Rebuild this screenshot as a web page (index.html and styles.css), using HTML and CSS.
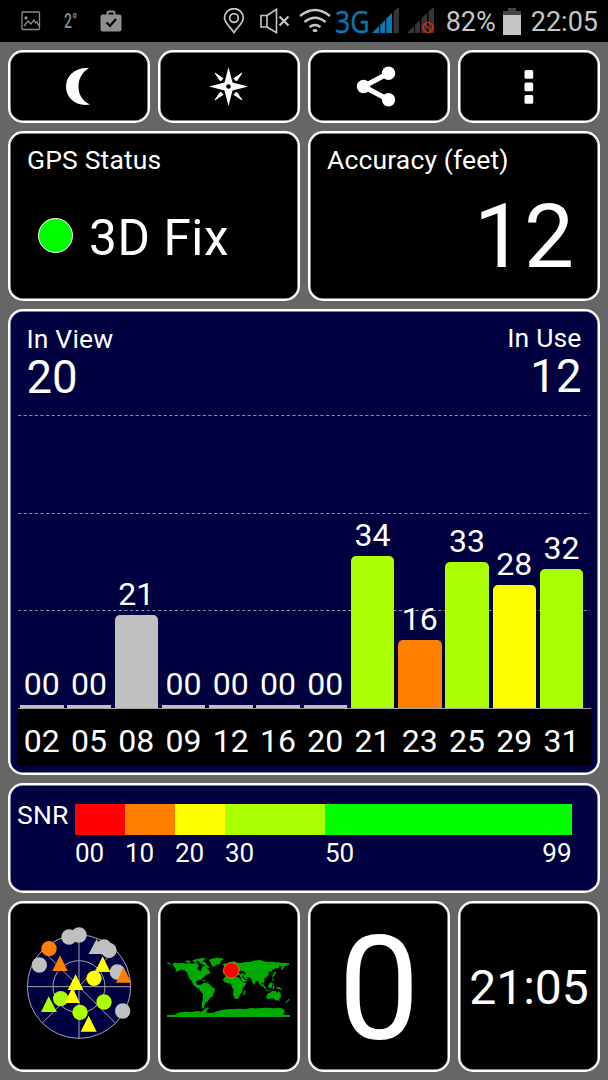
FILE: index.html
```html
<!DOCTYPE html>
<html lang="en">
<head>
  <meta charset="UTF-8" />
  <meta name="viewport" content="width=device-width, initial-scale=1.0"/>
  <title>GPS Status</title>
  <link rel="stylesheet" href="styles.css">
</head>
<body>
  <header class="status-bar">
    <div class="notifications">
      <svg width="20" height="20" viewBox="0 0 20 20" fill="none" stroke="#8b8b8f" stroke-width="1.3">
        <rect x="1" y="1" width="17.5" height="17.5" rx="1"/>
        <path d="M3 15l4-5 3 3 3-4 1.5 3 1.5-1 2 4"/>
        <circle cx="5" cy="7" r="1" fill="#8b8b8f"/>
      </svg>
      <span class="temp">2°</span>
      <svg width="22" height="22" viewBox="0 0 22 22">
        <path d="M7.500 5V3q0-1.500 1.500-1.500h4q1.500 0 1.500 1.500v2" fill="none" stroke="#8f8f93" stroke-width="2"/>
        <rect x="0.500" y="4.500" width="21" height="17" rx="2" fill="#8f8f93"/>
        <path d="M6.500 12.500l3.500 3.500 6-7" fill="none" stroke="#000" stroke-width="2.200"/>
      </svg>
    </div>
    <div class="indicators">
      <svg class="pin" width="22" height="26" viewBox="0 0 22 26" fill="none" stroke="#c6c6c6" stroke-width="1.700">
        <path d="M11 24.500C6 17.500 1.500 14.500 1.500 10a9.300 9.300 0 0 1 18.800 0c0 4.500-4.300 7.500-9.300 14.500z"/>
        <circle cx="11" cy="10" r="4.300"/>
      </svg>
      <svg class="mute" width="30" height="26" viewBox="0 0 30 26" fill="none" stroke="#c6c6c6" stroke-width="1.600">
        <path d="M1 7.500h6v11.500H1zM7 7.500l9.500-6.200v23.400L7 19"/>
        <path d="M19.500 8.500l9 9M28.500 8.500l-9 9" stroke-width="2.200"/>
      </svg>
      <svg class="wifi" width="34" height="26" viewBox="0 0 34 26" fill="none" stroke="#c6c6c6" stroke-width="2.300">
        <path d="M2 8q15-12 30 0M6.500 14q10.500-8.500 21 0M11.500 19q5.500-4 11 0"/>
        <ellipse cx="17" cy="22.500" rx="2.500" ry="1.500" fill="#c6c6c6" stroke="none"/>
      </svg>
      <span class="network">3G</span>
      <svg class="signal" width="28" height="28" viewBox="0 0 28 28">
        <path d="M0 27l7-7v7zM8.200 19l4.800-5v13H8.200zM14.300 12.500l5.700-5.500v20h-5.700z" fill="#0877b2"/>
        <path d="M21.500 5.500L27 1v26h-5.500z" fill="#353535"/>
      </svg>
      <svg class="signal" width="28" height="28" viewBox="0 0 28 28">
        <path d="M0 27l7-7v7zM8 19l5-5v13H8zM14.300 12.500l5.700-5.500v20h-5.700zM21.500 5.500L27 1v26h-5.500z" fill="#353535"/>
        <circle cx="21" cy="21.500" r="5" fill="none" stroke="#c92d10" stroke-width="1.600"/>
        <path d="M17.500 18l7 7" stroke="#c92d10" stroke-width="1.600"/>
      </svg>
      <span class="percent">82%</span>
      <svg class="battery" width="18" height="27" viewBox="0 0 18 27">
        <path d="M0 3h5V0h8v3h5v5H0z" fill="#44444f"/>
        <path d="M0 7h18v20H0z" fill="#c4c4c4"/>
      </svg>
      <span class="clock">22:05</span>
    </div>
  </header>

  <main class="dashboard">
    <button class="card tool" aria-label="Night mode">
      <svg width="142" height="73" viewBox="0 0 142 73" fill="#fff">
        <path d="M81 18C67 17 58 25.500 58 36.700S68 57 82 54.500C74 51 70.500 44 70.500 36.500S74 22 81 18z"/>
      </svg>
    </button>
    <button class="card tool" aria-label="Compass">
      <svg width="142" height="73" viewBox="0 0 142 73" fill="#fff">
        <path d="M70.500 17l4 15.500L90 36.500l-15.500 4-4 15.500-4-15.500-15.500-4 15.500-4z"/>
        <path d="M57 23l8 5.500-2.500 2.500zM84 23l-8 5.500 2.500 2.500zM57 50l8-5.500-2.500-2.500zM84 50l-8-5.500 2.500-2.500z" stroke="#fff"/>
        <circle cx="70.500" cy="36.500" r="2.300" fill="#000"/>
      </svg>
    </button>
    <button class="card tool" aria-label="Share">
      <svg width="142" height="73" viewBox="0 0 142 73" fill="#fff">
        <path d="M80.500 23.200L55.500 36.500l25 13.300" fill="none" stroke="#fff" stroke-width="5"/>
        <circle cx="80.500" cy="23.200" r="6.700"/>
        <circle cx="55.500" cy="36.500" r="6.700"/>
        <circle cx="80.500" cy="49.800" r="6.700"/>
      </svg>
    </button>
    <button class="card tool" aria-label="Menu">
      <svg width="142" height="73" viewBox="0 0 142 73" fill="#fff">
        <rect x="66.500" y="20" width="8.700" height="8.700" rx="1.500"/>
        <rect x="66.500" y="32.500" width="8.700" height="8.700" rx="1.500"/>
        <rect x="66.500" y="45" width="8.700" height="8.700" rx="1.500"/>
      </svg>
    </button>

    <section class="card half">
      <h2 class="label">GPS Status</h2>
      <div class="fix">
        <span class="fix-dot"></span>
        <span class="fix-text">3D Fix</span>
      </div>
    </section>
    <section class="card half">
      <h2 class="label">Accuracy (feet)</h2>
      <div class="accuracy">12</div>
    </section>

    <section class="card chart">
      <div class="chart-head">
        <div>
          <h2 class="label">In View</h2>
          <div class="count">20</div>
        </div>
        <div class="in-use">
          <h2 class="label">In Use</h2>
          <div class="count">12</div>
        </div>
      </div>
      <div class="plot">
        <svg class="grid-lines" width="573" height="308" viewBox="0 0 573 308">
          <path d="M0 15.500h572M0 113.500h572M0 210.500h572" stroke="#8c8ca8" stroke-width="1.200" stroke-dasharray="3.200 2.400"/>
        </svg>
        <div class="bars">
          <div class="sat"><span>00</span><i class="bar none" style="height: 3px"></i></div>
          <div class="sat"><span>00</span><i class="bar none" style="height: 3px"></i></div>
          <div class="sat"><span>21</span><i class="bar idle" style="height: 93px"></i></div>
          <div class="sat"><span>00</span><i class="bar none" style="height: 3px"></i></div>
          <div class="sat"><span>00</span><i class="bar none" style="height: 3px"></i></div>
          <div class="sat"><span>00</span><i class="bar none" style="height: 3px"></i></div>
          <div class="sat"><span>00</span><i class="bar none" style="height: 3px"></i></div>
          <div class="sat"><span>34</span><i class="bar good" style="height: 152px"></i></div>
          <div class="sat"><span>16</span><i class="bar poor" style="height: 68px"></i></div>
          <div class="sat"><span>33</span><i class="bar good" style="height: 146px"></i></div>
          <div class="sat"><span>28</span><i class="bar fair" style="height: 123px"></i></div>
          <div class="sat"><span>32</span><i class="bar good" style="height: 139px"></i></div>
        </div>
      </div>
      <div class="axis">
        <span>02</span><span>05</span><span>08</span><span>09</span><span>12</span><span>16</span>
        <span>20</span><span>21</span><span>23</span><span>25</span><span>29</span><span>31</span>
      </div>
    </section>

    <section class="card snr">
      <h2 class="label">SNR</h2>
      <div class="scale">
        <div class="seg bad"></div>
        <div class="seg poor"></div>
        <div class="seg fair"></div>
        <div class="seg good"></div>
        <div class="seg best"></div>
        <span>00</span>
        <span>10</span>
        <span>20</span>
        <span>30</span>
        <span class="ends">50<b>99</b></span>
      </div>
    </section>

    <section class="card tile">
      <svg width="138" height="167" viewBox="30 24 414 501">
        <circle cx="237" cy="275" r="155" fill="#000040"/>
        <g fill="none" stroke="#a3a3b2" stroke-width="3">
          <circle cx="237" cy="275" r="155"/>
          <circle cx="237" cy="275" r="78"/>
          <path d="M82 275h310M237 120v310M127 165l218 218M127 384L345 166"/>
        </g>
        <g fill="#c0c0c0">
          <circle cx="207" cy="126" r="23"/>
          <circle cx="237" cy="120" r="23"/>
          <path d="M266 177l24-45 24 45z"/>
          <circle cx="312" cy="156" r="23"/>
          <circle cx="327" cy="166" r="23"/>
          <circle cx="118" cy="210" r="23"/>
          <circle cx="352" cy="231" r="23"/>
          <circle cx="368" cy="348" r="23"/>
        </g>
        <g fill="#ff8000">
          <circle cx="147" cy="161" r="23"/>
          <path d="M157 228l23-47 23 47zM348 263l23-47 23 47z"/>
        </g>
        <g fill="#aaff00">
          <circle cx="182" cy="311" r="23"/>
          <circle cx="312" cy="321" r="23"/>
          <circle cx="240" cy="352" r="23"/>
          <path d="M123 351l23-47 25 47z"/>
        </g>
        <g fill="#ffff00">
          <circle cx="282" cy="250" r="23"/>
          <path d="M194 324l23-47 23 47zM285 231l23-47 23 47zM203 285l24-47 23 47zM242 410l24-48 24 48z"/>
        </g>
      </svg>
    </section>
    <section class="card tile">
      <svg width="138" height="167" viewBox="15 -111 414 501">
        <g fill="#00aa00">
          <path d="M36 68h8l4 6h-5l-3-3h-4zM52 72l6-4 14 2 12-1 10 2 8-3 6 3 12-2 8 3 4 7-5 6 5 6 6 2 2-6 3-9 9 1 6 7 4 3 2 6 4 3-7 4-6 1-5 6-8 5-4 7-4-1-8 2-3 5 3 7 8 2 5-4 1 6-3 5 6 2 2 6 8 3-2 2-9-2-8-6-10-5-9-9-5-11-6-5-5-11-2-9-9-7-12-2-6 5-10 2 4-5-4-6z"/>
          <path d="M90 64l10-3 7 3-4 4-11-1zM111 62l12-5 7 2-6 5 4 5-10-2zM126 58l14-4 14 1-7 5-10 6-8-2zM133 67l10-3 10 6 5 7 6 4-3 4-8-3-3-6-10-4z"/>
          <path d="M161 59l14-4 12-1 14 1 5 4-9 5-2 7-11 3-6 6-6-1-5-9-3-7z"/>
          <path d="M136 120l10-1 7 5-5 1-6-4zM155 125l7 1-2 3-6-2zM203 73l9-3 5 3-5 5-7-1z"/>
          <path d="M141 131l7-3 11 2 8 6 4 5 9 5-1 9-4 6-3 9-8 5-5 9-7 5-3 7-2 7 1 4-7-4-1-8 3-15 1-18-7-7-4-10 5-7z"/>
          <path d="M204 118l6-8 8-2 11 0 6 5 8-2 10 2 6 10 7 6 9-1-5 9-7 8-1 12-6 5-3 9-6 6-8-1-5-14 2-11-6-11-2-9-12-1-8-4-4-7z"/>
          <path d="M267 154l4-3 1 5-4 10-4-1zM207 100l10 1 6-5 10 3 7 6 7-1 6 1 4 8 4 11 3 4 12-6 3-6-7-5 9 0 7 5 4 11 6 8 4-11 7-2 7 14 5 4-3-14 7 3 4-5-2-8 7-4 8-9-2-7 8-2 5 5-2-8 10-6 11-1 1-7 8 2-3 8 4 4 4-8 3-5 16-4-4-4-20-2-19-1-12-2-17 0-18-5-21 2-9 4-16 0-9 3-12-1-12-4-13 4-12 9-1 7 5 5-11 4 1 5z"/>
          <path d="M219 87l5-6 5 9-3 5-8 1zM359 94l5 4-5 7-6 7-4-2 6-7zM352 116l3-3 2 8-4 2zM320 132l5 1 7 9 4 7-5-2-9-10zM334 150l14 2 12 2-5 1-20-3zM339 136l8-9 6 4-3 12-9 1zM353 138l6-1-2 10-4 2zM352 128l4 2 2 6-3-1zM364 141l9 1 8 6-4 2-12-5z"/>
          <path d="M339 160l9-3 7-4 8 1 5 5 3-7 6 9 1 9-6 9-10 3-7-8-13 2-7 2-1-10zM370 180h5l-3 4zM400 176l4 3-3 3-7 7-4-1 8-7z"/>
          <path d="M36 231v-6l26-1 6-6 19-3 25 1 13-3 14 2 10-7 9-6 4 2-6 7-3 8 20-1 17-5 10-3 16-2 18-1 18-1 19 2 16-4 22 1 25-2 21 2 22-1 12 5-1 9-5 3 8 4L405 225v6z"/>
        </g>
        <path d="M250 95l6-3 10 2 5 4-1 8-5-7-7 3-8-2zM262 106l9 10 9 2-2 2-8 0-9-10z" fill="#000"/>
        <circle cx="229" cy="91" r="23.500" fill="#f00" stroke="#d4b52b" stroke-width="2"/>
      </svg>
    </section>
    <section class="card tile"><span class="speed">0</span></section>
    <section class="card tile"><span class="time">21:05</span></section>
  </main>
</body>
</html>
```

FILE: styles.css
```css
* {
  box-sizing: border-box;
}

body {
  margin: 0;
  height: 1080px;
  overflow: hidden;
  background: #666666;
  color: #fff;
  font-family: Roboto, sans-serif;
}

svg {
  display: block;
}

.status-bar {
  display: flex;
  justify-content: space-between;
  height: 42px;
  padding: 0 10px 0 21px;
  background: #000;
  color: #c6c6c6;
  line-height: 42px;
}

.notifications,
.indicators {
  display: flex;
  align-items: center;
  white-space: nowrap;
}

.temp {
  width: 14px;
  margin: 0 22px 0 23px;
  color: #8b8b8f;
  font-size: 20px;
  font-weight: 500;
  transform: scaleX(0.7);
  transform-origin: left;
}

.mute {
  margin-left: 15px;
}

.wifi {
  margin-left: 8px;
}

.network {
  width: 32px;
  margin: 0 5px 0 3px;
  color: #0877b2;
  font-family: "Open Sans", sans-serif;
  font-size: 31px;
  -webkit-text-stroke: 0.4px #0877b2;
  transform: scaleX(0.86);
  transform-origin: left;
}

.signal {
  margin-right: 7px;
  margin-bottom: 3px;
}

.percent,
.clock {
  font-size: 27px;
  padding-top: 2px;
}

.percent {
  margin-left: 4px;
}

.battery {
  margin: 0 10px 0 7px;
}

.dashboard {
  display: grid;
  grid-template-columns: repeat(4, 142px);
  grid-template-rows: 73px 170px 466px 110px 171px;
  gap: 8px;
  padding: 8px;
}

.card {
  border: 2px solid #fff;
  border-radius: 15px;
  box-shadow: inset 0 0 0 0.5px #fff;
  background: #000;
  color: #fff;
  overflow: hidden;
}

.label {
  margin: 0;
  font-size: 26.5px;
  font-weight: 400;
  letter-spacing: 0.15px;
  line-height: 30px;
}

.tool {
  display: flex;
  align-items: center;
  justify-content: center;
  padding: 0;
}

.tool svg {
  flex: none;
}

.half {
  grid-column: span 2;
  padding: 12px 24px 0 17px;
}

.fix {
  display: flex;
  align-items: center;
  margin-top: 37px;
  padding-left: 11px;
}

.fix-dot {
  width: 35px;
  height: 35px;
  margin: 0 16px 4px 0;
  border: 1px solid #fff;
  border-radius: 50%;
  background: #0f0;
}

.fix-text {
  font-size: 49.5px;
  letter-spacing: 0.6px;
  line-height: 52px;
  margin-bottom: -2px;
}

.accuracy {
  margin-top: 17px;
  font-size: 89px;
  line-height: 90px;
  text-align: right;
}

.chart,
.snr {
  grid-column: span 4;
  background: #000040;
}

.chart {
  padding: 13px 7.5px 0;
}

.chart-head {
  display: flex;
  justify-content: space-between;
  height: 76px;
  padding: 0 9px;
}

.in-use {
  margin-top: -1px;
  text-align: right;
}

.count {
  font-size: 45.5px;
  line-height: 48px;
}

/* grid lines and bars share one cell */
.plot {
  display: grid;
  height: 308px;
}

.grid-lines,
.bars {
  grid-area: 1 / 1;
}

.bars,
.axis {
  display: grid;
  grid-template-columns: repeat(12, 43.5px);
  column-gap: 3.75px;
  padding-left: 2.5px;
  font-size: 32px;
  text-align: center;
}

.sat {
  display: flex;
  flex-direction: column;
  justify-content: flex-end;
}

.sat span {
  line-height: 37px;
  margin-bottom: 2px;
}

.bar {
  border-radius: 5px 5px 0 0;
}

.none,
.idle {
  background: #c0c0c0;
}

.none {
  border-radius: 0;
}

.bad {
  background: #ff0000;
}

.poor {
  background: #ff8000;
}

.fair {
  background: #ffff00;
}

.good {
  background: #aaff00;
}

.best {
  background: #00ff00;
}

.axis {
  height: 58px;
  border-top: 1px solid #a0a0a0;
  background: #000;
  line-height: 65px;
}

.snr {
  display: flex;
  padding: 15px 26px 0 7px;
}

.snr .label {
  width: 58px;
}

.scale {
  display: grid;
  grid-template-columns: 50px 50px 50px 100px 246.5px;
  grid-template-rows: 31px 30px;
  row-gap: 3px;
  padding-top: 4px;
  font-size: 26px;
  line-height: 30px;
}

.ends {
  display: flex;
  justify-content: space-between;
}

.ends b {
  font-weight: 400;
}

.tile {
  display: flex;
  align-items: center;
  justify-content: center;
}

.speed {
  padding-top: 5px;
  font-size: 145px;
  line-height: 167px;
}

.time {
  padding-top: 2px;
  font-size: 48px;
}
```
